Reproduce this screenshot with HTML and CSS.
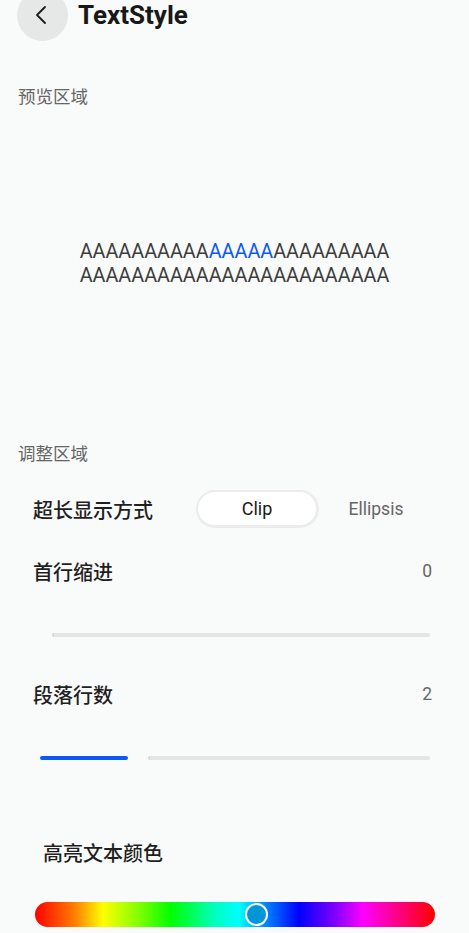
FILE: index.html
```html
<!DOCTYPE html>
<html lang="zh-CN">
<head>
  <meta charset="utf-8">
  <meta name="viewport" content="width=device-width, initial-scale=1.0">
  <link rel="stylesheet" href="styles.css">
  <title>TextStyle</title>
</head>
<body>
  <header class="top-bar">
    <span class="back-btn">
      <svg width="24" height="24" viewBox="0 0 24 24"><path d="M15 4 L7 12 L15 20" fill="none" stroke="#1a1a1a" stroke-width="1.8" stroke-linecap="round" stroke-linejoin="round"/></svg>
    </span>
    <h1>TextStyle</h1>
  </header>

  <main>
    <div class="section-title preview-title">预览区域</div>
    <section class="preview">
      <p class="preview-text">AAAAAAAAAA<span class="hl">AAAAA</span>AAAAAAAAA<br>AAAAAAAAAAAAAAAAAAAAAAAA</p>
    </section>

    <div class="section-title adjust-title">调整区域</div>

    <div class="row segment-row">
      <span class="label">超长显示方式</span>
      <div class="segment">
        <span class="seg-item active">Clip</span>
        <span class="seg-item">Ellipsis</span>
      </div>
    </div>

    <div class="row value-row first">
      <span class="label">首行缩进</span>
      <span class="value">0</span>
    </div>
    <div class="slider">
      <div class="track indent-track"></div>
    </div>

    <div class="row value-row">
      <span class="label">段落行数</span>
      <span class="value">2</span>
    </div>
    <div class="slider">
      <div class="fill" style="width: 88px"></div>
      <div class="track lines-track"></div>
    </div>

    <div class="row color-row">
      <span class="label">高亮文本颜色</span>
    </div>
    <div class="color-bar">
      <span class="color-thumb" style="left: 210px"></span>
    </div>
  </main>
</body>
</html>
```

FILE: styles.css
```css
body {
  margin: 0;
  padding: 0;
  background-color: #f9fafa;
  font-family: Roboto, "Noto Sans", "Noto Sans CJK SC", sans-serif;
  color: #1a1a1a;
  overflow: hidden;
}

.top-bar {
  display: flex;
  align-items: center;
  gap: 10px;
  height: 50px;
  margin-top: -10px;
  padding-left: 17px;
}

.back-btn {
  width: 51px;
  height: 51px;
  border-radius: 50%;
  background: #e6e7e7;
  display: flex;
  align-items: center;
  justify-content: center;
}

.back-btn svg {
  margin-left: -2px;
}

.top-bar h1 {
  margin: 0;
  font-size: 26px;
  font-weight: 700;
  color: #181818;
}

.section-title {
  margin-left: 18px;
  height: 20px;
  line-height: 20px;
  font-size: 17.5px;
  color: #666;
  font-family: "Noto Sans CJK SC", sans-serif;
}

.preview-title {
  margin-top: 46px;
}

.preview {
  height: 316px;
  display: flex;
  align-items: center;
  justify-content: center;
}

.preview-text {
  margin: 0;
  font-size: 19.8px;
  line-height: 24px;
  color: #3d3d3d;
  font-weight: 400;
}

.hl {
  color: #0a59f7;
}

.adjust-title {
  margin-top: 21px;
}

.row {
  display: flex;
  align-items: center;
  justify-content: space-between;
  padding: 0 37px 0 33px;
}

.label {
  font-family: "Noto Sans CJK SC", sans-serif;
  font-size: 20px;
  font-weight: 500;
  color: #1f1f1f;
}

.segment-row {
  margin-top: 27px;
  height: 38px;
  padding-right: 27px;
}

.segment {
  display: flex;
  width: 246px;
  height: 38px;
}

.seg-item {
  flex: 1;
  display: flex;
  align-items: center;
  justify-content: center;
  font-size: 17.5px;
  color: #666;
  padding-right: 9px;
}

.seg-item.active {
  flex: 0 0 123px;
  box-sizing: border-box;
  background: #fff;
  color: #1a1a1a;
  font-size: 18px;
  border-radius: 19px;
  border: 2px solid #ececec;
  border-right-width: 3px;
  border-bottom-width: 3px;
  padding-right: 0;
}

.value-row {
  height: 24px;
  margin-top: 35px;
}

.value-row.first {
  margin-top: 31px;
}

.value {
  font-size: 17.5px;
  color: #666;
}

.slider {
  display: flex;
  align-items: center;
  height: 24px;
  margin: 40px 39px 0 40px;
}

.track {
  flex: 1;
  height: 4px;
  border-radius: 2px;
  background: #e4e5e5;
}

.indent-track {
  margin-left: 12px;
  border-left: 2px solid #d6d6d6;
}

.fill {
  height: 4px;
  border-radius: 2px;
  background: #0a59f7;
}

.lines-track {
  margin-left: 20px;
  border-left: 2px solid #d6d6d6;
}

.color-row {
  margin-top: 70px;
  height: 24px;
  padding-left: 43px;
}

.color-bar {
  position: relative;
  margin: 38px 34px 0 35px;
  height: 25px;
  border-radius: 13px;
  background: linear-gradient(to right,
    #ff0000 0%, #ff8000 10%, #ffff00 17%, #80ff00 26%, #00ff00 34%,
    #00ffc0 45%, #00ffff 51%, #0080ff 58%, #0000ff 66%,
    #8000ff 75%, #ff00ff 82%, #ff0080 91%, #ff0000 100%);
}

.color-thumb {
  position: absolute;
  top: 1px;
  width: 19px;
  height: 19px;
  border: 2.5px solid #fff;
  border-radius: 50%;
  background: #0096d8;
}
```
